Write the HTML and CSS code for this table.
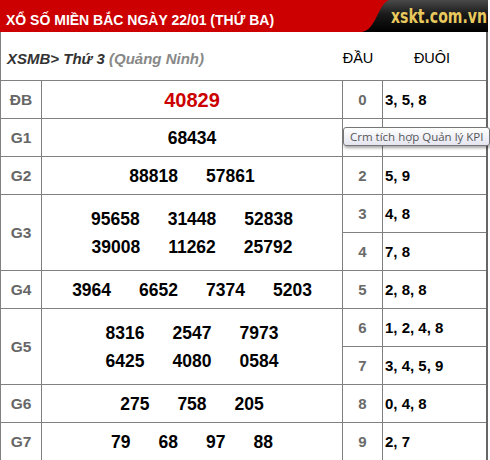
FILE: index.html
```html
<!DOCTYPE html>
<html lang="vi">
<head>
<meta charset="utf-8">
<title>XSMB 22/01</title>
<link rel="stylesheet" href="styles.css">
</head>
<body>
<div class="board">
  <div class="hdr">
    <span class="title">XỔ SỐ MIỀN BẮC NGÀY 22/01 (THỨ BA)</span>
    <div class="logo"><span class="logo-text">xskt.com.vn</span></div>
  </div>
  <div class="sub">
    <span class="region">XSMB&gt; Thứ 3 <span class="prov">(Quảng Ninh)</span></span>
    <span class="dau">ĐẦU</span>
    <span class="duoi">ĐUÔI</span>
  </div>
  <div class="grid">
    <div class="lbl">ĐB</div>
    <div class="nums"><div class="line"><span class="db">40829</span></div></div>
    <div class="head">0</div><div class="tail">3, 5, 8</div>

    <div class="lbl">G1</div>
    <div class="nums"><div class="line"><span>68434</span></div></div>
    <div class="head"></div><div class="tail"></div>

    <div class="lbl">G2</div>
    <div class="nums"><div class="line"><span>88818</span><span>57861</span></div></div>
    <div class="head">2</div><div class="tail">5, 9</div>

    <div class="lbl span2">G3</div>
    <div class="nums span2">
      <div class="line"><span>95658</span><span>31448</span><span>52838</span></div>
      <div class="line"><span>39008</span><span>11262</span><span>25792</span></div>
    </div>
    <div class="head">3</div><div class="tail">4, 8</div>
    <div class="head">4</div><div class="tail">7, 8</div>

    <div class="lbl">G4</div>
    <div class="nums"><div class="line"><span>3964</span><span>6652</span><span>7374</span><span>5203</span></div></div>
    <div class="head">5</div><div class="tail">2, 8, 8</div>

    <div class="lbl span2">G5</div>
    <div class="nums span2">
      <div class="line"><span>8316</span><span>2547</span><span>7973</span></div>
      <div class="line"><span>6425</span><span>4080</span><span>0584</span></div>
    </div>
    <div class="head">6</div><div class="tail">1, 2, 4, 8</div>
    <div class="head">7</div><div class="tail">3, 4, 5, 9</div>

    <div class="lbl">G6</div>
    <div class="nums"><div class="line"><span>275</span><span>758</span><span>205</span></div></div>
    <div class="head">8</div><div class="tail">0, 4, 8</div>

    <div class="lbl">G7</div>
    <div class="nums"><div class="line"><span>79</span><span>68</span><span>97</span><span>88</span></div></div>
    <div class="head">9</div><div class="tail">2, 7</div>
  </div>
</div>
<div class="tip">Crm tích hợp Quản lý KPI</div>
</body>
</html>
```
FILE: styles.css
```css
* { box-sizing: border-box; }
body {
  margin: 0;
  background: #fff;
  font-family: "Liberation Sans", Arial, sans-serif;
}
.board { width: 488px; }

.hdr {
  display: flex;
  height: 32px;
  background: #cc0000;
}
.title {
  flex: 1;
  color: #fff;
  font-weight: bold;
  font-size: 14px;
  line-height: 16px;
  padding: 12px 0 0 6px;
  white-space: nowrap;
}
.logo {
  width: 130px;
  height: 32px;
  background: linear-gradient(180deg, #4a4a4a 0%, #1a1a1a 45%, #000 100%);
  clip-path: path('M31 0 H130 V32 H4 C18 30 20 4 31 0 Z');
  text-align: right;
  padding: 4px 1px 0 0;
  line-height: 24px;
  white-space: nowrap;
}
.logo-text {
  display: inline-block;
  color: #e9c95e;
  font-family: "DejaVu Sans Condensed", "DejaVu Sans", sans-serif;
  font-weight: bold;
  font-size: 20px;
  transform: scaleX(0.78);
  transform-origin: right center;
}

.sub {
  height: 48px;
  display: flex;
  align-items: center;
  padding-top: 4px;
  border-left: 1px solid #808080;
  border-right: 2px solid #666;
  font-size: 15px;
}
.region {
  flex: 1;
  padding-left: 6px;
  font-weight: bold;
  font-style: italic;
  color: #333;
}
.prov { color: #888; }
.dau { width: 40px; text-align: center; color: #000; font-size: 14.5px; }
.duoi { width: 108px; text-align: center; color: #000; font-size: 14.5px; }

.grid {
  display: grid;
  grid-template-columns: 40px 300px 39px 103px;
  grid-auto-rows: 37px;
  gap: 1px;
  padding: 1px 0 0 1px;
  background: #808080;
  border-right: 2px solid #666;
}
.grid > div { background: #fff; }
.span2 { grid-row: span 2; }

.lbl {
  display: flex;
  align-items: center;
  justify-content: center;
  font-weight: bold;
  font-size: 15.5px;
  color: #666;
}
.nums {
  display: flex;
  flex-direction: column;
  justify-content: center;
  font-weight: bold;
  font-size: 17.5px;
  color: #000;
}
.line {
  display: flex;
  justify-content: center;
  gap: 28px;
  line-height: 28px;
}
.db { color: #cc0000; font-size: 20px; }
.head {
  display: flex;
  align-items: center;
  justify-content: center;
  font-weight: bold;
  font-size: 15px;
  color: #6a6a6a;
}
.tail {
  display: flex;
  align-items: center;
  padding-left: 2px;
  font-weight: bold;
  font-size: 15px;
  color: #000;
}

.tip {
  position: absolute;
  left: 343px;
  top: 127px;
  height: 19px;
  padding: 0 6px;
  border: 1px solid #767676;
  border-radius: 3px;
  background: linear-gradient(180deg, #ffffff, #e4e5f0);
  box-shadow: 1px 2px 3px rgba(0, 0, 0, 0.35);
  font-family: "Open Sans", "Noto Sans", sans-serif;
  font-size: 11.5px;
  line-height: 17px;
  color: #575757;
  white-space: nowrap;
}
```
